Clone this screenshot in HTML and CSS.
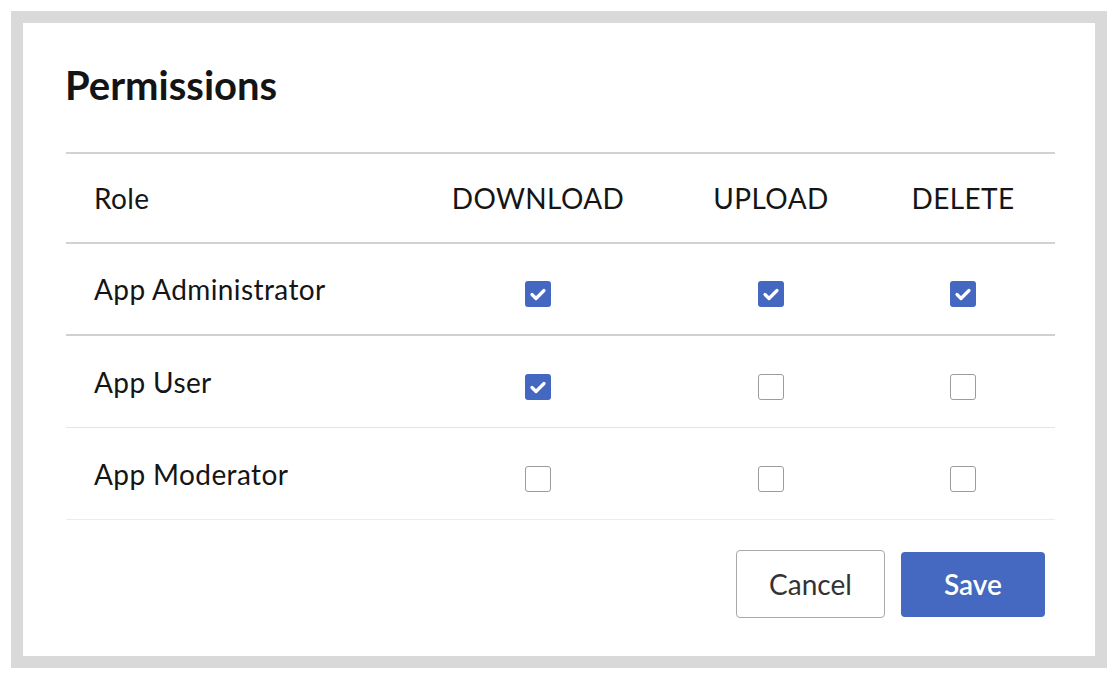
FILE: index.html
```html
<!DOCTYPE html>
<html lang="en">
<head>
    <meta charset="UTF-8">
    <meta name="viewport" content="width=device-width, initial-scale=1.0">
    <title>Permissions</title>
    <link rel="stylesheet" href="styles.css">
</head>
<body>
    <div class="frame">
        <h1>Permissions</h1>

        <div class="perm-table">
            <div class="perm-row head">
                <div class="cell role">Role</div>
                <div class="cell">DOWNLOAD</div>
                <div class="cell">UPLOAD</div>
                <div class="cell">DELETE</div>
            </div>
            <div class="perm-row first">
                <div class="cell role">App Administrator</div>
                <div class="cell"><span class="box checked"><svg viewBox="0 0 26 26"><polyline points="7,13.5 11,17.5 19,9.5"/></svg></span></div>
                <div class="cell"><span class="box checked"><svg viewBox="0 0 26 26"><polyline points="7,13.5 11,17.5 19,9.5"/></svg></span></div>
                <div class="cell"><span class="box checked"><svg viewBox="0 0 26 26"><polyline points="7,13.5 11,17.5 19,9.5"/></svg></span></div>
            </div>
            <div class="perm-row">
                <div class="cell role">App User</div>
                <div class="cell"><span class="box checked"><svg viewBox="0 0 26 26"><polyline points="7,13.5 11,17.5 19,9.5"/></svg></span></div>
                <div class="cell"><span class="box"></span></div>
                <div class="cell"><span class="box"></span></div>
            </div>
            <div class="perm-row last">
                <div class="cell role">App Moderator</div>
                <div class="cell"><span class="box"></span></div>
                <div class="cell"><span class="box"></span></div>
                <div class="cell"><span class="box"></span></div>
            </div>
        </div>

        <div class="actions">
            <button class="btn cancel">Cancel</button>
            <button class="btn save">Save</button>
        </div>
    </div>
</body>
</html>
```

FILE: styles.css
```css
* {
    margin: 0;
    padding: 0;
    box-sizing: border-box;
    font-family: Lato, "Open Sans", sans-serif;
}

body {
    background-color: white;
}

.frame {
    margin: 11px;
    width: 1096px;
    height: 657px;
    border: 12px solid #d9d9d9;
    background-color: white;
    padding: 39px 40px 0 43px;
}

h1 {
    font-size: 40px;
    line-height: 46px;
    font-weight: 700;
    color: #141414;
    margin-left: -1px;
}

.perm-table {
    margin-top: 44px;
}

.perm-row {
    display: grid;
    grid-template-columns: 355px 234px 232px 152px;
    height: 92px;
    border-bottom: 1px solid #e4e4e8;
    color: #151515;
    font-size: 28px;
    letter-spacing: 0.4px;
}

.perm-row.head {
    border-top: 2px solid #d2d2d2;
    border-bottom: 2px solid #d2d2d2;
}

.perm-row.first {
    border-bottom: 2px solid #d0d0d4;
}

.perm-row.last {
    border-bottom-color: #ececec;
}

.cell {
    display: flex;
    align-items: center;
    justify-content: center;
}

.cell.role {
    justify-content: flex-start;
    padding-left: 28px;
}

.box {
    display: block;
    width: 26px;
    height: 26px;
    margin-top: 10px;
    border: 1.5px solid #9c9c9c;
    border-radius: 3px;
    background-color: white;
}

.box.checked {
    border: none;
    background-color: #4467c2;
}

.box svg {
    display: block;
    width: 26px;
    height: 26px;
}

.box polyline {
    fill: none;
    stroke: white;
    stroke-width: 3.2;
    stroke-linecap: round;
    stroke-linejoin: round;
}

.actions {
    display: flex;
    justify-content: flex-end;
    align-items: center;
    gap: 16px;
    margin-top: 30px;
    padding-right: 10px;
}

.btn {
    font-size: 28px;
    border-radius: 4px;
    cursor: pointer;
}

.btn.cancel {
    width: 149px;
    height: 68px;
    background-color: white;
    border: 1px solid #a8a8a8;
    color: #333;
}

.btn.save {
    width: 144px;
    height: 65px;
    background-color: #4568c0;
    border: none;
    color: white;
    font-weight: 600;
}
```
